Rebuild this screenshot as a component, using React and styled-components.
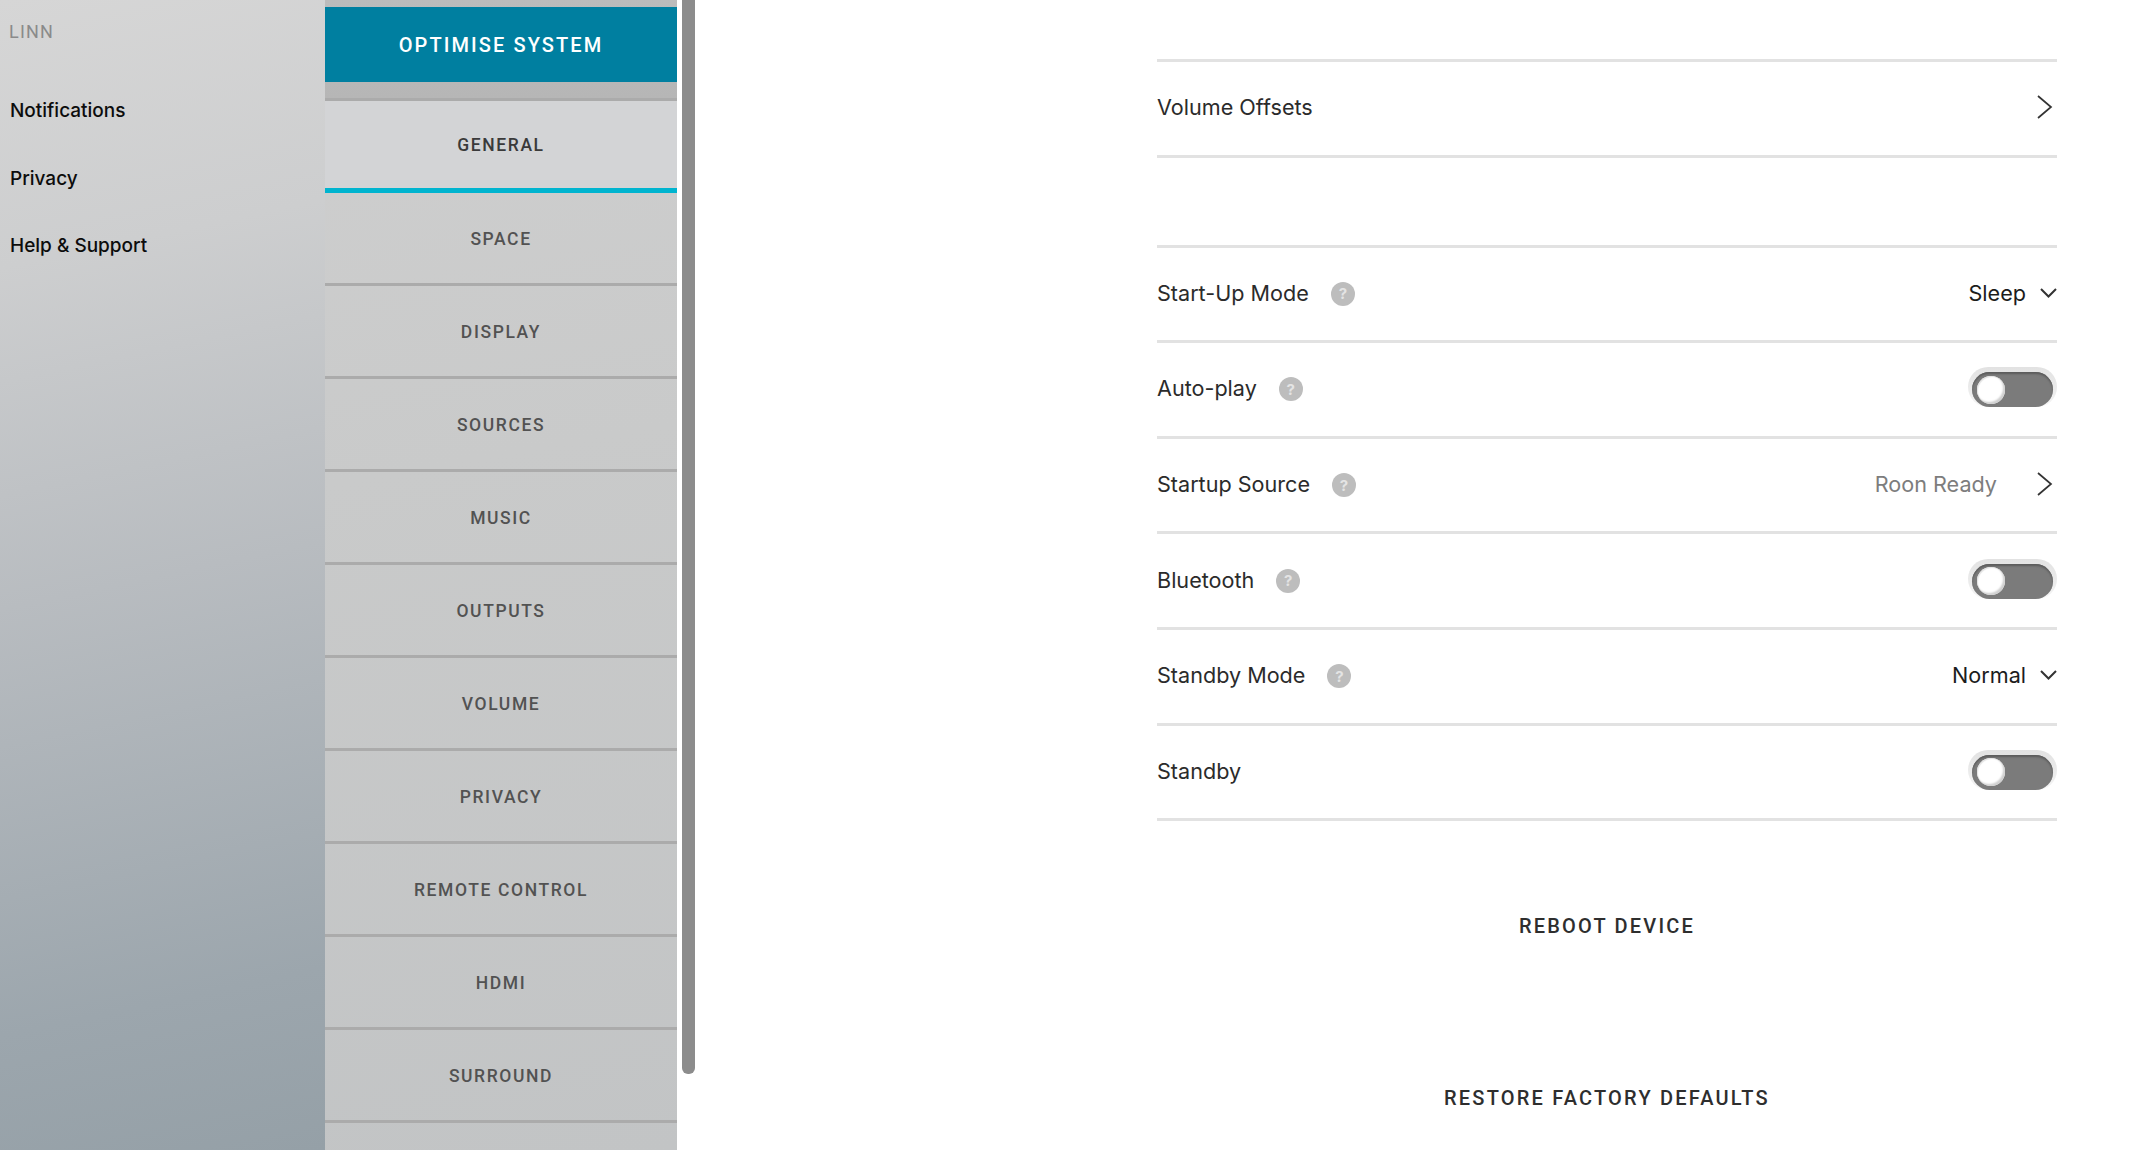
import { createGlobalStyle, styled } from "styled-components";

const Global = createGlobalStyle`
  html, body {
    margin: 0;
    height: 100%;
    overflow: hidden;
    background: #ffffff;
  }
  * { box-sizing: border-box; }
`;

const Page = styled.div`
  display: flex;
  width: 2136px;
  height: 1150px;
  overflow: hidden;
  font-family: Inter, "Liberation Sans", sans-serif;
`;

const Sidebar = styled.nav`
  width: 325px;
  padding: 21px 10px;
  display: flex;
  flex-direction: column;
  background: linear-gradient(168deg, #d6d6d6 0%, #cdcecf 22%, #b8bcc0 50%, #9ca6ad 85%, #95a0a7 100%);
`;

const Brand = styled.div`
  font-family: Roboto, sans-serif;
  font-size: 18px;
  letter-spacing: 1.2px;
  line-height: 22px;
  color: #8a8a8a;
  margin-left: -1px;
  margin-bottom: 56px;
`;

const SideLink = styled.a`
  font-size: 19px;
  font-weight: 500;
  line-height: 24px;
  color: #0c0c0c;
  margin-bottom: 43.6px;
`;

const NavColumn = styled.div`
  width: 352px;
  display: flex;
  flex-direction: column;
  background: linear-gradient(170deg, #cfcfcf 0%, #c9caca 40%, #c2c4c5 100%);
`;

const NavHeader = styled.div`
  flex: none;
  padding: 7px 0 16px;
  background: linear-gradient(180deg, #bcbcbc, #b6b6b6);
`;

const OptimiseButton = styled.button`
  display: block;
  width: 100%;
  height: 75px;
  border: 0;
  padding: 1px 0 0;
  background: #007fa0;
  color: #ffffff;
  font-family: Roboto, sans-serif;
  font-size: 20px;
  font-weight: 500;
  letter-spacing: 2.1px;
`;

const NavItem = styled.div`
  flex: none;
  height: ${(p) => (p.$active ? "95px" : "93px")};
  padding-top: 1px;
  display: flex;
  align-items: center;
  justify-content: center;
  color: ${(p) => (p.$active ? "#3a3a3a" : "#525252")};
  font-family: Roboto, sans-serif;
  font-size: 17.5px;
  font-weight: 500;
  letter-spacing: 1.6px;
  border-top: ${(p) => (p.$active ? "3px solid #ababab" : "none")};
  border-bottom: ${(p) => (p.$active ? "5px solid #00b4cf" : "3px solid #ababab")};
  background: ${(p) => (p.$active ? "#d3d4d6" : "transparent")};
`;

const ScrollTrack = styled.div`
  width: 18px;
  height: 1150px;
  padding-left: 5px;
`;

const ScrollThumb = styled.div`
  width: 13px;
  height: 1074px;
  background: #8c8c8c;
  border-radius: 0 0 6px 6px;
`;

const Main = styled.main`
  width: 900px;
  margin-left: 462px;
  padding-top: 59px;
`;

const Group = styled.section`
  border-top: 3px solid #e2e2e2;
  margin-bottom: 87px;
`;

const Row = styled.div`
  height: 95.6px;
  display: flex;
  align-items: center;
  justify-content: space-between;
  border-bottom: 3px solid #e2e2e2;
  padding-bottom: 2px;
`;

const Label = styled.div`
  display: flex;
  align-items: center;
  gap: 22px;
  font-size: 21.6px;
  color: #2b2b2b;
`;

const Help = styled.span`
  width: 24px;
  height: 24px;
  border-radius: 50%;
  background: #bdbdbd;
  color: #e4e4e4;
  font-size: 15px;
  font-weight: 700;
  display: flex;
  align-items: center;
  justify-content: center;
  margin-top: 2px;
`;

const Value = styled.div`
  display: flex;
  align-items: center;
  gap: ${(p) => (p.$muted ? "39px" : "14px")};
  font-size: 21.6px;
  color: ${(p) => (p.$muted ? "#7d7d7d" : "#1c1c1c")};
`;

const ChevronIcon = styled.svg`
  display: block;
  fill: none;
  stroke: #333333;
  margin-right: ${(p) => (p.$right ? "4px" : "0")};
`;

const Toggle = styled.div`
  width: 89px;
  height: 40px;
  margin-bottom: 2px;
  padding: 5px 4px 0;
  border-radius: 20px;
  background: linear-gradient(180deg, #e2e2e2 0%, #ececec 60%, #f6f6f6 100%);
`;

const ToggleBody = styled.div`
  height: 35px;
  border-radius: 18px;
  background: #7b7b7b;
  box-shadow: inset 0 2px 2px #5c5c5c;
  display: flex;
  align-items: center;
  padding-left: 5px;
`;

const Knob = styled.div`
  width: 28px;
  height: 28px;
  border-radius: 50%;
  background: #ffffff;
  box-shadow: inset -2px -2px 2px #cfcfcf, inset 1px 1px 1px #e2e2e2;
`;

const ActionList = styled.div`
  display: flex;
  flex-direction: column;
  align-items: center;
  gap: 150px;
  padding-top: 7px;
`;

const Action = styled.div`
  font-family: Roboto, sans-serif;
  font-size: 20px;
  line-height: 22px;
  font-weight: 500;
  letter-spacing: 2.2px;
  color: #2e2e2e;
`;

const navItems = ["SPACE", "DISPLAY", "SOURCES", "MUSIC", "OUTPUTS", "VOLUME", "PRIVACY", "REMOTE CONTROL", "HDMI", "SURROUND", ""];

const ArrowRight = () => (
  <ChevronIcon $right width="17" height="24" viewBox="0 0 17 24" strokeWidth="1.7">
    <path d="M2 1 L15 12 L2 23" />
  </ChevronIcon>
);

const ArrowDown = () => (
  <ChevronIcon width="17" height="10" viewBox="0 0 17 10" strokeWidth="2">
    <path d="M1 1 L8.5 8.5 L16 1" />
  </ChevronIcon>
);

const Switch = () => (
  <Toggle>
    <ToggleBody>
      <Knob />
    </ToggleBody>
  </Toggle>
);

const SettingRow = ({ label, help, children }) => (
  <Row>
    <Label>
      {label}
      {help && <Help>?</Help>}
    </Label>
    {children}
  </Row>
);

const App = () => {
  return (
    <>
      <Global />
      <Page>
        <Sidebar>
          <Brand>LINN</Brand>
          <SideLink>Notifications</SideLink>
          <SideLink>Privacy</SideLink>
          <SideLink>Help &amp; Support</SideLink>
        </Sidebar>
        <NavColumn>
          <NavHeader>
            <OptimiseButton>OPTIMISE SYSTEM</OptimiseButton>
          </NavHeader>
          <NavItem $active>GENERAL</NavItem>
          {navItems.map((item) => (
            <NavItem key={item}>{item}</NavItem>
          ))}
        </NavColumn>
        <ScrollTrack>
          <ScrollThumb />
        </ScrollTrack>
        <Main>
          <Group>
            <SettingRow label="Volume Offsets">
              <ArrowRight />
            </SettingRow>
          </Group>
          <Group>
            <SettingRow label="Start-Up Mode" help>
              <Value>
                Sleep
                <ArrowDown />
              </Value>
            </SettingRow>
            <SettingRow label="Auto-play" help>
              <Switch />
            </SettingRow>
            <SettingRow label="Startup Source" help>
              <Value $muted>
                Roon Ready
                <ArrowRight />
              </Value>
            </SettingRow>
            <SettingRow label="Bluetooth" help>
              <Switch />
            </SettingRow>
            <SettingRow label="Standby Mode" help>
              <Value>
                Normal
                <ArrowDown />
              </Value>
            </SettingRow>
            <SettingRow label="Standby">
              <Switch />
            </SettingRow>
          </Group>
          <ActionList>
            <Action>REBOOT DEVICE</Action>
            <Action>RESTORE FACTORY DEFAULTS</Action>
          </ActionList>
        </Main>
      </Page>
    </>
  );
};

export default App;
